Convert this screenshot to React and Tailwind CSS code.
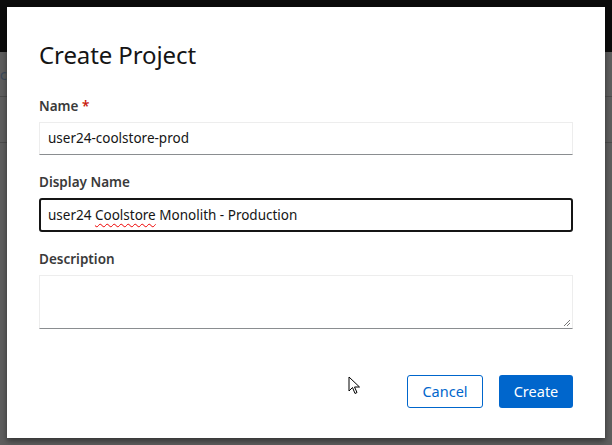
import React from 'react';

function Field({ label, required, children }) {
    return (
        <div className="flex flex-col">
            <label className="text-[13.5px] leading-[20px] font-semibold text-[#3a3a3a] mb-[6px]">
                {label}
                {required && <span className="text-[#c9190b]"> *</span>}
            </label>
            {children}
        </div>
    );
}

export default function App() {
    return (
        <div className="relative w-[612px] h-[445px] overflow-hidden bg-[#5e5e5e]" style={{ fontFamily: '"Noto Sans", "Open Sans", sans-serif' }}>
            <div className="h-[52px] bg-[#0b0b0b]" />
            <div className="flex flex-col">
                <div className="h-[45px] border-b border-[#4c4c4c] flex items-center">
                    <span className="text-[15px] text-[#3c4a5c] -ml-[4px]">ic</span>
                </div>
                <div className="h-[46px] border-b border-[#4c4c4c]" />
            </div>

            <div className="absolute left-[7px] top-[7px] w-[598px] h-[431px] bg-white shadow-[0_3px_6px_rgba(0,0,0,0.45)] flex flex-col px-[32px] pt-[32px]">
                <h1 className="text-[24px] leading-[32px] text-[#151515] font-normal tracking-[-0.1px]">Create Project</h1>

                <div className="mt-[25px] flex flex-col gap-[17px]">
                    <Field label="Name" required>
                        <div className="h-[33px] border border-[#ededed] border-b-[#8a8d90] flex items-center px-[8px] text-[13.5px] text-[#151515]">
                            user24-coolstore-prod
                        </div>
                    </Field>
                    <Field label="Display Name">
                        <div className="h-[34px] border-2 border-[#151515] rounded-[3px] flex items-center px-[7px] text-[13.5px] text-[#151515]">
                            <span>user24&nbsp;</span>
                            <span className="underline decoration-wavy decoration-[#e00] decoration-[1px] underline-offset-[3px]">Coolstore</span>
                            <span>&nbsp;Monolith - Production</span>
                        </div>
                    </Field>
                    <Field label="Description">
                        <div className="relative h-[54px] border border-[#ededed] border-b-[#8a8d90]">
                            <svg className="absolute right-[1px] bottom-[1px]" width="9" height="9" viewBox="0 0 9 9">
                                <path d="M8 2 L2 8 M8 5 L5 8" stroke="#777" strokeWidth="1" />
                            </svg>
                        </div>
                    </Field>
                </div>

                <div className="mt-[46px] flex justify-end gap-[16px]">
                    <button className="w-[76px] h-[33px] border border-[#06c] rounded-[3px] text-[#06c] text-[14.5px]">Cancel</button>
                    <button className="w-[74px] h-[33px] bg-[#06c] rounded-[3px] text-white text-[14.5px]">Create</button>
                </div>
            </div>

            <svg className="absolute left-[348px] top-[376px]" width="13" height="20" viewBox="0 0 13 20">
                <path d="M1 1 L1 15 L4.5 11.5 L7 17.5 L9 16.5 L6.5 11 L11.5 11 Z" fill="#fff" stroke="#000" strokeWidth="1" strokeLinejoin="round" />
            </svg>
        </div>
    );
}
